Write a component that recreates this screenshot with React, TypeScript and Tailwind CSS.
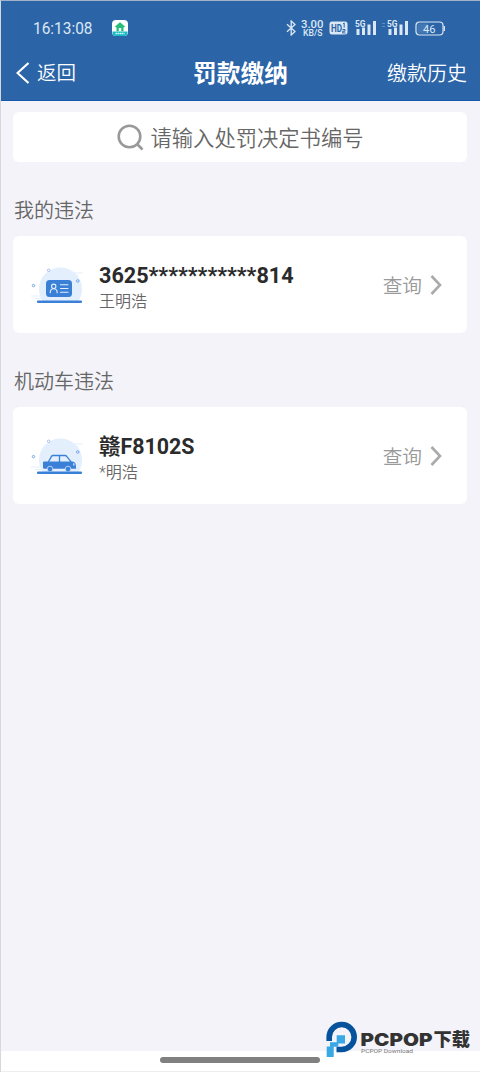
import type { ReactNode } from 'react';

interface ViolationCardProps {
    icon: ReactNode;
    title: string;
    titleWidth: string;
    subtitle: string;
}

const SignalBars = () => (
    <svg width="22" height="18" viewBox="0 0 22 18" fill="#dce7f5">
        <text x="0" y="7.6" fontSize="9" fontWeight="700" textLength="10.5" lengthAdjust="spacingAndGlyphs">5G</text>
        <rect x="1.5" y="10" width="3" height="6" />
        <rect x="7" y="8.5" width="3" height="7.5" />
        <rect x="12.5" y="5.5" width="3" height="10.5" />
        <rect x="18" y="2" width="3" height="14" />
    </svg>
);

const StatusBar = () => (
    <div className="flex h-[54px] items-center pl-8 text-[#dce7f5]">
        <svg className="w-[79px]" height="22" viewBox="0 0 79 22" fill="currentColor">
            <text x="0" y="17" fontSize="16.5" textLength="59.5" lengthAdjust="spacingAndGlyphs">16:13:08</text>
        </svg>
        <svg width="17" height="17" viewBox="0 0 17 17">
            <rect width="16" height="16" rx="4" fill="#fff" />
            <path d="M0.5 11.5h15v1a3.5 3.5 0 0 1-3.5 3.5H4a3.5 3.5 0 0 1-3.5-3.5z" fill="#18b9c4" />
            <path d="M8 2.2 13 6.6l-.8 1L11.5 7v4.2H9.2V8H6.8v3.2H4.5V7l-.7.6-.8-1z" fill="#25bd78" />
            <path d="M3.5 13.5h9" stroke="#d8fff6" strokeWidth="1.5" strokeDasharray="1.5 .5" />
        </svg>
        <svg className="ml-[157px]" width="11" height="16" viewBox="0 0 11 16" fill="none" stroke="currentColor" strokeWidth="1.3">
            <path d="M1 4.3 9 11.5 5.2 15V1L9 4.5 1 11.7" />
        </svg>
        <svg className="ml-[3px]" width="25" height="22" viewBox="0 0 25 22" fill="currentColor" fontWeight="500">
            <text x="1" y="10.5" fontSize="10.5" textLength="22.5" lengthAdjust="spacingAndGlyphs">3.00</text>
            <text x="3" y="19" fontSize="8.5" textLength="19.5" lengthAdjust="spacingAndGlyphs">KB/S</text>
        </svg>
        <svg className="ml-1" width="19" height="14" viewBox="0 0 19 14">
            <rect x="0.5" y="0.5" width="18" height="13" rx="2.5" fill="#dce7f5" />
            <text x="2" y="10.5" fontSize="10" fontWeight="700" fill="#2b65a8" textLength="11" lengthAdjust="spacingAndGlyphs">HD</text>
            <path d="M14 3l1.2-1v4.5M13.5 8.5h2.5v1.7h-2.3v1.8h2.8" fill="none" stroke="#2b65a8" strokeWidth="1" />
        </svg>
        <span className="ml-[7px]"><SignalBars /></span>
        <svg className="ml-[5px]" width="4" height="16" viewBox="0 0 4 16" fill="#5e8cc1">
            <path d="M0 3h3v1H0zM0 6h3v1H0z" />
        </svg>
        <span className="ml-px"><SignalBars /></span>
        <svg className="ml-1.5" width="31" height="15" viewBox="0 0 31 15">
            <rect x="1" y="1" width="27" height="13" rx="3.5" fill="none" stroke="#dce7f5" strokeWidth="1.2" />
            <path d="M4 2.5h9v10H4A1.5 1.5 0 0 1 2.5 11V4A1.5 1.5 0 0 1 4 2.5z" fill="#4478b5" />
            <path d="M29.3 5v5" stroke="#dce7f5" strokeWidth="1.3" />
            <text x="8" y="11.5" fontSize="11" fill="#dce7f5" textLength="12.5" lengthAdjust="spacingAndGlyphs">46</text>
        </svg>
    </div>
);

// Shared backdrop for both card icons
const IconBackdrop = ({ children }: { children: ReactNode }) => (
    <svg width="54" height="40" viewBox="0 0 54 40" fill="none">
        <path d="M12.2 35.7a21.5 21.5 0 1 1 34.6 0z" fill="#e4effd" />
        <path d="M40 7h12M36 9.5h11M0 30h9M4 32.5h8" stroke="#e4effd" strokeWidth="1" />
        <circle cx="17.7" cy="4.3" r="1.3" stroke="#a9bff0" />
        <circle cx="2.5" cy="19.6" r="1.2" stroke="#76a9e8" />
        <circle cx="46.8" cy="15" r="1.3" stroke="#76a9e8" />
        {children}
        <path d="M7.2 35.7h42.6" stroke="#3a80d6" strokeWidth="2.6" strokeLinecap="round" />
    </svg>
);

const IdCardIcon = () => (
    <IconBackdrop>
        <rect x="15" y="14" width="26" height="17" rx="3.5" fill="#3a80d6" />
        <g stroke="#e4effd" strokeWidth="1.1" strokeLinecap="round">
            <circle cx="22.7" cy="20.3" r="2.2" />
            <path d="M19.2 26.7c0-2.5 1.4-4 3.5-4s3.5 1.5 3.5 4M29.5 18.8h7.5M29.5 22.5h7.5M29.5 26.3h7.5" />
        </g>
    </IconBackdrop>
);

const CarIcon = () => (
    <IconBackdrop>
        <path d="M17 25.5 20.5 19.4q.5-.9 1.5-.9h12q1 0 1.7.8l4.8 6M28.5 18.5v7" stroke="#3a80d6" strokeWidth="1.3" />
        <path d="M13 24.5h28q3.5.3 3.8 3.5l.3 3.8H13.5q-1.5 0-1.5-1.5v-5q0-.8 1-.8z" fill="#3a80d6" />
        <circle cx="19" cy="32" r="2.8" fill="#3a80d6" stroke="#e4effd" strokeWidth=".7" />
        <circle cx="37" cy="32" r="2.8" fill="#3a80d6" stroke="#e4effd" strokeWidth=".7" />
        <path d="M42.8 26.3v2.3" stroke="#e4effd" strokeWidth="1.2" />
    </IconBackdrop>
);

const ViolationCard = ({ icon, title, titleWidth, subtitle }: ViolationCardProps) => (
    <div className="flex h-[97px] items-center rounded-md bg-white pt-0.5 pr-[25px] pl-[18px]">
        <div className="mt-px w-[68px]">{icon}</div>
        <div className="flex-1 pt-[5px]">
            <div className={`leading-[26px] font-bold text-[#2b2b2b] ${titleWidth}`}>{title}</div>
            <div className="text-base leading-[25px] font-[350] text-[#666]">{subtitle}</div>
        </div>
        <button className="flex items-center gap-2 text-[19.7px] leading-none font-[350] text-[#999]">
            <span className="pt-[3px]">查询</span>
            <svg width="12" height="20" viewBox="0 0 12 20" fill="none" stroke="#aaa" strokeWidth="2.6">
                <path d="M1.5 1 10 10l-8.5 9" />
            </svg>
        </button>
    </div>
);

const Watermark = () => (
    <svg className="absolute top-[1019px] left-[324px]" width="149" height="40" viewBox="0 0 149 40">
        <path d="M4.2 21V17A12.5 12.5 0 1 1 16.7 29.5H11.5" fill="none" stroke="#07529d" strokeWidth="5.6" />
        <path d="M11.7 15.2H20v8.3h-6.7v3.3H8.7V37H1.7V26.5H5v-4.3h6.7z" fill="#39a8e4" />
        <g fill="#333" fontWeight="900">
            <text x="35.5" y="25.5" fontSize="17.5" fontFamily="Inter" textLength="72" lengthAdjust="spacingAndGlyphs">PCPOP</text>
            <text x="108.5" y="26" fontSize="18" textLength="36.5" lengthAdjust="spacingAndGlyphs">下载</text>
        </g>
        <text x="36" y="33" fontSize="5.8" fill="#777" textLength="52" lengthAdjust="spacingAndGlyphs">PCPOP Download</text>
    </svg>
);

const App = () => {
    return (
        <div className="relative flex h-[1072px] w-[480px] flex-col overflow-hidden border-t border-l border-t-[#a3b2c9] border-l-[#d5d8df] bg-[#f3f3f9] font-['Roboto','Noto_Sans_CJK_SC',sans-serif]">
            <header className="h-[100px] shrink-0 border-b border-[#1459aa] bg-[#2b65a8] text-white">
                <StatusBar />
                <div className="flex h-[35px] items-center justify-between pr-3 pl-[15px]">
                    <button className="flex w-[80px] items-center gap-[7px] text-[19.5px] leading-none">
                        <svg className="shrink-0" width="14" height="22" viewBox="0 0 14 22" fill="none" stroke="currentColor" strokeWidth="2.2">
                            <path d="M12.5 1 1.5 11l11 10" />
                        </svg>
                        <span className="pt-[3px] font-[350]">返回</span>
                    </button>
                    <h1 className="pt-1 pr-0.5 text-[23.7px] leading-none font-bold">罚款缴纳</h1>
                    <button className="w-[81px] pt-[3px] text-left text-[20px] leading-none font-[350] whitespace-nowrap">缴款历史</button>
                </div>
            </header>

            <main className="flex-1 px-3 pt-[11px] pr-[13px]">
                <div className="flex h-[50px] items-center justify-center gap-[7px] rounded-md bg-white text-[21.3px] leading-none font-[350] text-[#666]">
                    <svg width="27" height="27" viewBox="0 0 27 27" fill="none" stroke="#999" strokeWidth="2.6">
                        <circle cx="12.5" cy="12.5" r="10.8" />
                        <path d="m20 20 5.5 5.5" />
                    </svg>
                    <span className="pt-1">请输入处罚决定书编号</span>
                </div>

                <h2 className="mt-[35px] mb-[9px] ml-px h-[30px] text-[20px] leading-7 font-[350] text-[#666]">我的违法</h2>
                <ViolationCard icon={<IdCardIcon />} title="3625***********814" titleWidth="text-[21.6px]" subtitle="王明浩" />

                <h2 className="mt-[35px] mb-[9px] ml-px h-[30px] text-[20px] leading-7 font-[350] text-[#666]">机动车违法</h2>
                <ViolationCard icon={<CarIcon />} title="赣F8102S" titleWidth="text-[21.4px]" subtitle="*明浩" />
            </main>

            <footer className="flex h-[21px] justify-center border-b border-[#eee] bg-white pt-[6px] pr-px">
                <div className="h-[6px] w-[160px] rounded-full bg-[#808080]" />
            </footer>
            <Watermark />
        </div>
    );
};

export default App;
